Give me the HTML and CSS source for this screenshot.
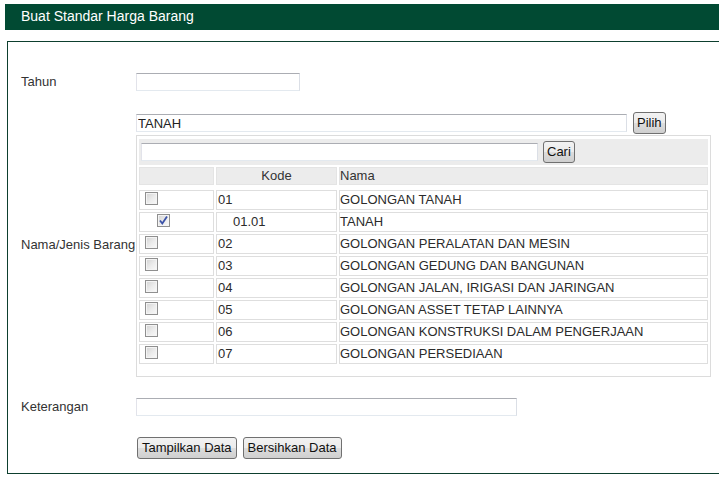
FILE: index.html
```html
<!DOCTYPE html>
<html>
<head>
<meta charset="utf-8">
<title>Buat Standar Harga Barang</title>
<link rel="stylesheet" href="styles.css">
</head>
<body>
<div class="page">
  <div class="title-bar">Buat Standar Harga Barang</div>
  <div class="panel">
    <div class="form">
      <div class="label">Tahun</div>
      <div class="field"><input class="txt txt-tahun" type="text"></div>

      <div class="label">Nama/Jenis Barang</div>
      <div class="field">
        <div class="pick-row">
          <input class="txt txt-nama" type="text" value="TANAH">
          <button class="btn btn-sm">Pilih</button>
        </div>
        <div class="picker">
          <div class="search-row">
            <input class="txt txt-cari" type="text">
            <button class="btn btn-sm">Cari</button>
          </div>
          <div class="hcell"></div>
          <div class="hcell center">Kode</div>
          <div class="hcell">Nama</div>

          <div class="cell cb-cell first"><span class="cb"></span></div>
          <div class="cell first">01</div>
          <div class="cell name first">GOLONGAN TANAH</div>

          <div class="cell cb-cell sub"><span class="cb"><svg width="11" height="11" viewBox="0 0 11 11"><path d="M2 5.5 L4.3 8.5 L9 1.5" fill="none" stroke="#3b52a8" stroke-width="1.8"/></svg></span></div>
          <div class="cell sub">01.01</div>
          <div class="cell name">TANAH</div>

          <div class="cell cb-cell"><span class="cb"></span></div>
          <div class="cell">02</div>
          <div class="cell name">GOLONGAN PERALATAN DAN MESIN</div>

          <div class="cell cb-cell"><span class="cb"></span></div>
          <div class="cell">03</div>
          <div class="cell name">GOLONGAN GEDUNG DAN BANGUNAN</div>

          <div class="cell cb-cell"><span class="cb"></span></div>
          <div class="cell">04</div>
          <div class="cell name">GOLONGAN JALAN, IRIGASI DAN JARINGAN</div>

          <div class="cell cb-cell"><span class="cb"></span></div>
          <div class="cell">05</div>
          <div class="cell name">GOLONGAN ASSET TETAP LAINNYA</div>

          <div class="cell cb-cell"><span class="cb"></span></div>
          <div class="cell">06</div>
          <div class="cell name">GOLONGAN KONSTRUKSI DALAM PENGERJAAN</div>

          <div class="cell cb-cell"><span class="cb"></span></div>
          <div class="cell">07</div>
          <div class="cell name">GOLONGAN PERSEDIAAN</div>
        </div>
      </div>

      <div class="label">Keterangan</div>
      <div class="field"><input class="txt txt-ket" type="text"></div>

      <div class="label"></div>
      <div class="field actions">
        <button class="btn">Tampilkan Data</button>
        <button class="btn">Bersihkan Data</button>
      </div>
    </div>
  </div>
</div>
</body>
</html>
```
FILE: styles.css
```css
html, body {
  margin: 0;
  padding: 0;
  background: #fff;
  overflow: hidden;
}
body {
  font-family: "Liberation Sans", Arial, sans-serif;
  font-size: 13px;
  color: #333;
}
.page {
  padding: 4px 0 0 5px;
}
.title-bar {
  height: 26px;
  line-height: 25px;
  background: #014a33;
  color: #fff;
  font-size: 14px;
  padding-left: 16px;
  margin-right: -20px;
}
.panel {
  margin: 11px -30px 0 2px;
  border: 1px solid #0d3f2e;
}
.form {
  display: grid;
  grid-template-columns: 115px 1fr;
  row-gap: 21px;
  align-items: center;
  padding: 31px 0 14px 13px;
}
.label {
  white-space: nowrap;
  margin-top: -1px;
}
.field {
  display: flex;
  flex-direction: column;
  align-items: flex-start;
}
.txt {
  box-sizing: border-box;
  height: 18px;
  margin: 0;
  padding: 0 1px;
  border: 1px solid;
  border-color: #abadb3 #dbdfe6 #e3e9ef #e2e3ea;
  font-family: "Liberation Sans", Arial, sans-serif;
  font-size: 13px;
  color: #222;
  background: #fff;
  outline: none;
}
.txt-tahun { width: 164px; }
.txt-nama { width: 491px; }
.txt-cari { width: 397px; }
.txt-ket { width: 381px; }
.btn {
  box-sizing: border-box;
  height: 22px;
  margin: 0;
  padding: 0 4px;
  border: 1px solid #707070;
  border-radius: 3px;
  background: linear-gradient(#f2f2f2 0%, #ebebeb 50%, #dddddd 51%, #cfcfcf 100%);
  font-family: "Liberation Sans", Arial, sans-serif;
  font-size: 13px;
  color: #111;
  line-height: 20px;
}
.btn-sm { padding: 0 3px; }
.pick-row {
  display: flex;
  align-items: center;
  gap: 6px;
}
.picker {
  margin-top: 1px;
  box-sizing: border-box;
  width: 575px;
  border: 1px solid #dcdcdc;
  padding: 3px 2px 12px 2px;
  display: grid;
  grid-template-columns: 75px 121px 369px;
  column-gap: 2px;
  row-gap: 2px;
}
.search-row {
  grid-column: 1 / 4;
  height: 26px;
  background: #ececec;
  display: flex;
  align-items: center;
  gap: 5px;
  padding-left: 2px;
}
.hcell {
  box-sizing: border-box;
  height: 18px;
  line-height: 16px;
  background: #ececec;
  border: 1px solid #e4e4e4;
  padding-left: 0;
}
.hcell.center {
  text-align: center;
}
.cell {
  box-sizing: border-box;
  height: 20px;
  line-height: 18px;
  border: 1px solid #dedede;
  background: #fff;
  padding-left: 1px;
  white-space: nowrap;
  color: #2b2b2b;
}
.cell.name {
  padding-left: 0;
}
.cell.first {
  margin-top: 3px;
}
.cell.sub {
  padding-left: 16px;
}
.cb-cell {
  padding-left: 5px;
  padding-top: 1px;
  line-height: 0;
}
.cb-cell.sub {
  padding-left: 17px;
}
.cb {
  display: inline-block;
  box-sizing: border-box;
  width: 13px;
  height: 13px;
  border: 1px solid #8f8f8f;
  box-shadow: inset 0 0 0 1px #f4f4f4;
  background: linear-gradient(135deg, #d2d2d2 0%, #ececec 55%, #fafafa 100%);
  position: relative;
}
.cb svg {
  position: absolute;
  left: 0;
  top: 0;
}
.actions {
  flex-direction: row;
  gap: 6px;
  padding-left: 1px;
}
```
